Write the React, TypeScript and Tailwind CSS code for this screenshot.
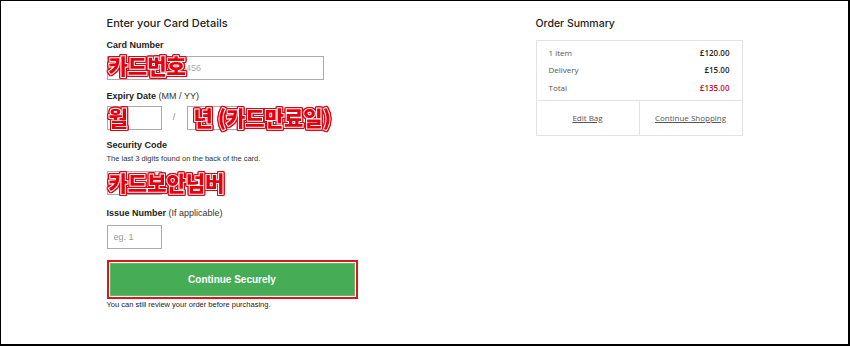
const koStroke =
  "absolute font-black text-[#e3000f] leading-none whitespace-nowrap [font-family:'Noto_Sans_CJK_KR',sans-serif] [-webkit-text-stroke:2px_white] [paint-order:stroke_fill] [filter:drop-shadow(1px_0_0_#e3000f)_drop-shadow(-1px_0_0_#e3000f)_drop-shadow(0_1px_0_#e3000f)_drop-shadow(0_-1px_0_#e3000f)]";

const Label = ({ title, note }: { title: string; note?: string }) => (
  <div className="text-[9px] leading-[12px] font-bold text-[#222]">
    {title}
    {note && <span className="font-normal text-[#333]"> {note}</span>}
  </div>
);

export default function App() {
  return (
    <div className="h-[346px] w-[850px] border-t border-l border-r-2 border-b-2 border-black bg-white [font-family:'Liberation_Sans',Arial,sans-serif]">
      <div className="mx-auto flex w-[636px] justify-between pt-[15px]">
        {/* card form */}
        <div className="w-[260px]">
          <h2 className="text-[11px] leading-[14px] font-medium text-[#222] [font-family:Inter,sans-serif]">
            Enter your Card Details
          </h2>

          <div className="mt-[9px]">
            <Label title="Card Number" />
            <div className="relative mt-[3px]">
              <input
                placeholder="1234 5678 9123 3456"
                className="h-[24px] w-[217px] border border-[#aaa] px-[6px] text-[9px] placeholder:text-[#aaa] outline-none"
              />
              <span className={`${koStroke} left-[2px] top-[1px] text-[21px]`}>카드번호</span>
            </div>
          </div>

          <div className="mt-[10px]">
            <Label title="Expiry Date" note="(MM / YY)" />
            <div className="relative mt-[4px] flex items-center">
              <input className="h-[24px] w-[55px] border border-[#aaa] outline-none" />
              <span className="w-[25px] text-center text-[9px] text-[#888]">/</span>
              <input className="h-[24px] w-[56px] border border-[#aaa] outline-none" />
              <span className={`${koStroke} left-[2px] top-[1px] text-[21px]`}>월</span>
              <span className={`${koStroke} left-[87px] top-[1px] text-[21px]`}>년 (카드만료일)</span>
            </div>
          </div>

          <div className="mt-[9px]">
            <Label title="Security Code" />
            <p className="mt-[3px] text-[7.5px] leading-[9px] text-[#333]">
              The last 3 digits found on the back of the card.
            </p>
            <div className="relative mt-[8px]">
              <input className="h-[24px] w-[55px] border border-[#aaa] outline-none" />
              <span className={`${koStroke} left-[2px] top-[1px] text-[21px]`}>카드보안넘버</span>
            </div>
          </div>

          <div className="mt-[12px]">
            <Label title="Issue Number" note="(If applicable)" />
            <input
              placeholder="eg. 1"
              className="mt-[6px] h-[24px] w-[55px] border border-[#aaa] px-[6px] text-[9px] placeholder:text-[#999] outline-none"
            />
          </div>

          <div className="mt-[11px] w-[251px] border-2 border-[#e0141e] p-px">
            <button className="h-[33px] w-full border border-[#5cbd6b] bg-[#46ad56] text-[10px] font-bold text-white">
              Continue Securely
            </button>
          </div>
          <p className="mt-[1px] text-[7.5px] leading-[9px] text-[#222]">
            You can still review your order before purchasing.
          </p>
        </div>

        {/* order summary */}
        <div className="w-[207px] [font-family:'Open_Sans',sans-serif]">
          <h2 className="mt-[1px] text-[10.5px] leading-[14px] font-medium text-[#222] [font-family:Inter,sans-serif]">
            Order Summary
          </h2>
          <div className="mt-[9px] border border-[#e3e3e3]">
            <div className="flex flex-col gap-[5.3px] px-[12px] pt-[6px] pb-[6px] text-[8px] leading-[12px]">
              <div className="flex justify-between">
                <span className="text-[#555]">1 item</span>
                <span className="font-semibold text-[#222]">£120.00</span>
              </div>
              <div className="flex justify-between">
                <span className="text-[#555]">Delivery</span>
                <span className="font-semibold text-[#222]">£15.00</span>
              </div>
              <div className="flex justify-between">
                <span className="text-[#555]">Total</span>
                <span className="font-semibold text-[#c8102e]">£135.00</span>
              </div>
            </div>
            <div className="flex h-[35px] border-t border-[#e3e3e3] text-[8px] text-[#555]">
              <a className="flex flex-1 items-center justify-center border-r border-[#e3e3e3] underline">Edit Bag</a>
              <a className="flex flex-1 items-center justify-center underline">Continue Shopping</a>
            </div>
          </div>
        </div>
      </div>
    </div>
  );
}
